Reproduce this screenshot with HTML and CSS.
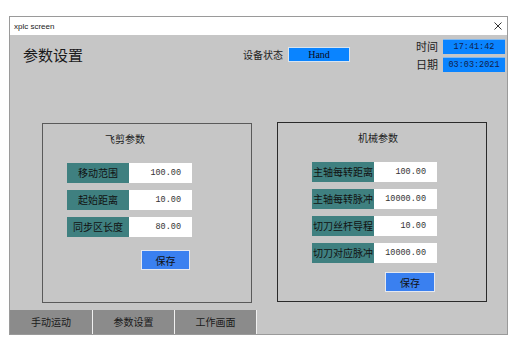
FILE: index.html
```html
<!DOCTYPE html>
<html>
<head>
<meta charset="utf-8">
<link rel="stylesheet" href="styles.css">
</head>
<body>
<div class="window">
  <div class="titlebar">
    <span class="title">xplc screen</span>
    <svg class="close" width="8" height="8" viewBox="0 0 8 8"><path d="M0.5 0.5L7.5 7.5M7.5 0.5L0.5 7.5" stroke="#333" stroke-width="1" fill="none"/></svg>
  </div>
  <div class="content">
    <div class="header">
      <div class="heading">参数设置</div>
      <div class="status">
        <span class="status-label">设备状态</span>
        <span class="status-box">Hand</span>
      </div>
      <div class="clock">
        <span class="clock-label">时间</span>
        <span class="clock-box">17:41:42</span>
        <span class="clock-label">日期</span>
        <span class="clock-box">03:03:2021</span>
      </div>
    </div>
    <div class="panels">
      <div class="panel panel-left">
        <div class="panel-title">飞剪参数</div>
        <div class="rows">
          <div class="row"><span class="label">移动范围</span><span class="value">100.00</span></div>
          <div class="row"><span class="label">起始距离</span><span class="value">10.00</span></div>
          <div class="row"><span class="label">同步区长度</span><span class="value">80.00</span></div>
        </div>
        <button class="save">保存</button>
      </div>
      <div class="panel panel-right">
        <div class="panel-title">机械参数</div>
        <div class="rows">
          <div class="row"><span class="label">主轴每转距离</span><span class="value">100.00</span></div>
          <div class="row"><span class="label">主轴每转脉冲</span><span class="value">10000.00</span></div>
          <div class="row"><span class="label">切刀丝杆导程</span><span class="value">10.00</span></div>
          <div class="row"><span class="label">切刀对应脉冲</span><span class="value">10000.00</span></div>
        </div>
        <button class="save">保存</button>
      </div>
    </div>
    <div class="tabs">
      <div class="tab">手动运动</div>
      <div class="tab">参数设置</div>
      <div class="tab">工作画面</div>
    </div>
  </div>
</div>
</body>
</html>
```

FILE: styles.css
```css
* { box-sizing: border-box; }
html, body { margin: 0; padding: 0; background: #ffffff; }
body { width: 516px; height: 342px; overflow: hidden; font-family: "Noto Sans CJK SC", "Noto Sans", sans-serif; color: #1a1a1a; }

.window {
  margin: 16px 0 0 9px;
  width: 499px;
  height: 319px;
  border: 1px solid #9a9a9a;
  display: flex;
  flex-direction: column;
  background: #c6c6c6;
}

.titlebar {
  height: 18px;
  background: #ffffff;
  display: flex;
  align-items: center;
  justify-content: space-between;
  padding: 0 5px 0 4px;
}
.title { font-family: "Liberation Sans", sans-serif; font-size: 8px; color: #222; }
.close { display: block; }

.content { flex: 1; display: flex; flex-direction: column; }

.header { height: 87px; display: flex; align-items: flex-start; padding-left: 13px; }
.heading { width: 220px; margin-top: 11px; font-size: 15px; line-height: 18px; color: #1a1a1a; }
.status { display: flex; align-items: center; gap: 3px; margin-top: 12px; height: 15px; }
.status-label { width: 42px; font-size: 10px; line-height: 15px; white-space: nowrap; color: #222; }
.status-box {
  width: 62px; height: 15px;
  background: #0a84ff;
  border: 1px solid #d8e4f0;
  font-family: "Liberation Serif", serif; font-size: 10px; line-height: 13px;
  text-align: center; color: #0a0a20;
}
.clock {
  margin-left: 66px; margin-top: 4px;
  display: grid;
  grid-template-columns: 20px 62px;
  column-gap: 7px;
  row-gap: 3px;
}
.clock-label { font-size: 11px; line-height: 15px; white-space: nowrap; color: #222; }
.clock-box {
  height: 15px;
  background: #0a84ff;
  border-top: 1px solid #7fb8f0;
  font-family: "Liberation Mono", monospace; font-size: 8.5px; line-height: 14px;
  text-align: center; color: #10204a;
}

.panels { display: flex; align-items: flex-start; padding-left: 32px; gap: 25px; }
.panel { width: 210px; height: 180px; border: 1px solid #4a4a4a; display: flex; flex-direction: column; align-items: flex-start; }
.panel-left { margin-top: 1px; border-color: #5a5a5a; }
.panel-right { border-color: #2a2a2a; }
.panel-title { margin-top: 8px; font-size: 10px; line-height: 14px; color: #222; }
.panel-left .panel-title { margin-left: 62px; }
.panel-right .panel-title { margin-left: 80px; }

.rows { margin-top: 17px; display: flex; flex-direction: column; gap: 7px; }
.panel-left .rows { margin-left: 24px; }
.panel-right .rows { margin-left: 34px; }
.row { display: flex; height: 20px; }
.label {
  width: 62px; background: #3f8080;
  font-size: 10px; line-height: 20px; text-align: center; white-space: nowrap; color: #111;
  overflow: hidden;
}
.value {
  width: 63px; background: #ffffff;
  font-family: "Liberation Mono", monospace; font-size: 8.5px; line-height: 20px;
  text-align: right; padding-right: 11px; color: #333;
}

.save {
  height: 20px; padding: 0;
  background: #3a80f0; border: 1px solid #e4e8f0;
  font-family: "Noto Sans CJK SC", sans-serif; font-size: 10px; line-height: 17px; color: #111;
}
.panel-left .save { margin-left: 98px; margin-top: 13px; width: 49px; }
.panel-right .save { margin-left: 107px; margin-top: 9px; width: 50px; }

.tabs { margin-top: auto; display: flex; height: 24px; }
.tab {
  background: #8b8b8b; border-right: 1px solid #f0f0f0;
  font-size: 10px; line-height: 24px; text-align: center; color: #1a1a1a;
}
.tab:nth-child(1) { width: 83px; }
.tab:nth-child(2) { width: 82px; }
.tab:nth-child(3) { width: 82px; }
```
